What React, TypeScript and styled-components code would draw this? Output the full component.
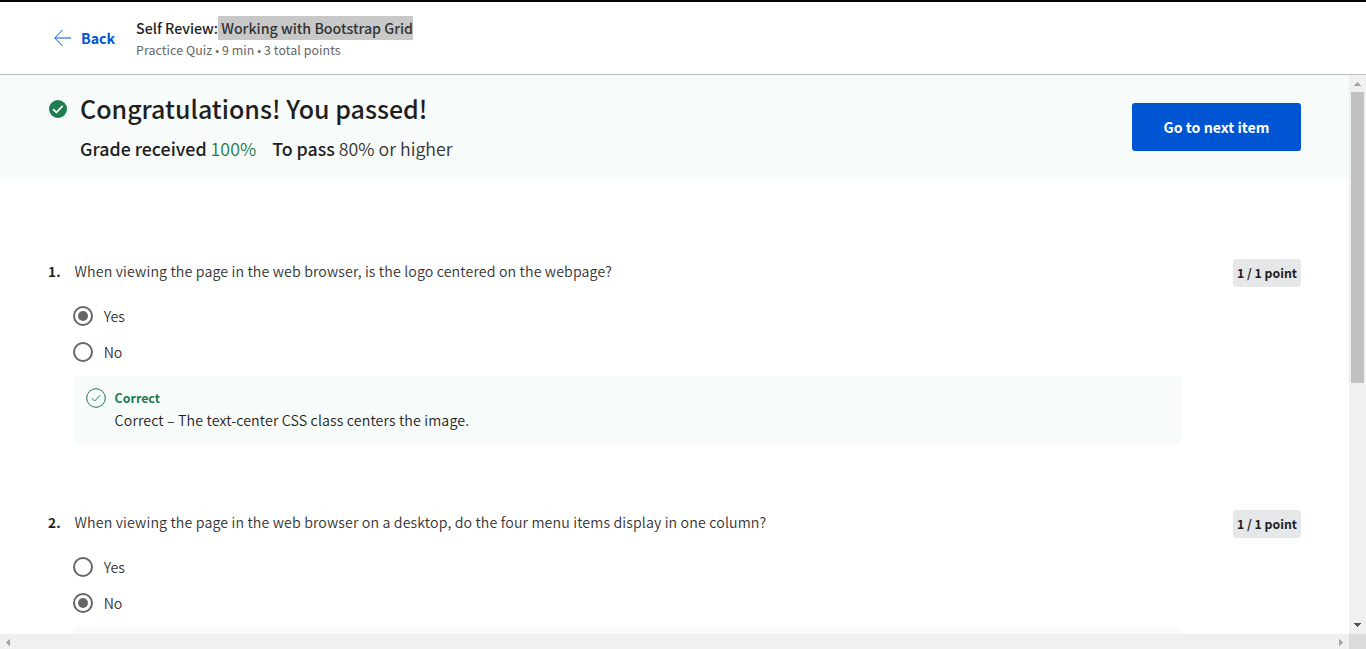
import React from "react";
import styled, { createGlobalStyle } from "styled-components";

const GlobalStyle = createGlobalStyle`
  *, *::before, *::after { box-sizing: border-box; }
  html, body { margin: 0; padding: 0; overflow: hidden; background: #fff; }
  body {
    font-family: "Noto Sans CJK SC", "Open Sans", sans-serif;
    color: #1f1f1f;
  }
  button { font-family: inherit; }
`;

const Page = styled.div`
  width: 1366px;
  height: 649px;
  display: flex;
  flex-direction: column;
  overflow: hidden;
`;

const Header = styled.header`
  height: 75px;
  flex: none;
  display: flex;
  border-top: 2px solid #050505;
  border-bottom: 1px solid #bdbdbd;
  padding-left: 54px;
`;

const BackLink = styled.a`
  display: flex;
  width: 82px;
  height: 24px;
  margin-top: 24px;
  color: #0056d2;
  font-size: 14.2px;
  line-height: 24px;
  font-weight: 700;
  svg { margin: 3px 10px 0 0; flex: none; }
`;

const Titles = styled.div`
  padding-top: 14px;
  white-space: nowrap;
`;

const QuizTitle = styled.div`
  display: flex;
  height: 24px;
  font-size: 14.2px;
  line-height: 24px;
  font-weight: 500;
  white-space: pre;
`;

const Highlight = styled.span`
  background: #c8c8c8;
  color: #333;
`;

const QuizMeta = styled.div`
  height: 20px;
  font-size: 12.4px;
  line-height: 20px;
  letter-spacing: 0.08px;
  color: #666;
`;

const Dot = styled.span`
  font-family: "Liberation Sans", sans-serif;
  font-size: 11px;
`;

const Body = styled.div`
  flex: 1;
  min-height: 0;
  display: flex;
`;

const Content = styled.main`
  flex: 1;
  height: 559px;
  overflow: hidden;
`;

const Banner = styled.section`
  height: 104px;
  background: #f7fbfa;
  display: flex;
  justify-content: space-between;
  padding: 17px 48px 0 49px;
`;

const Result = styled.div`
  display: flex;
  gap: 13px;
  & > svg { margin-top: 8px; flex: none; }
`;

const ResultTitle = styled.h1`
  margin: 0;
  font-size: 25px;
  line-height: 32px;
  font-weight: 500;
  white-space: nowrap;
`;

const GradeRow = styled.div`
  display: flex;
  gap: 16px;
  margin-top: 12px;
  font-size: 17.8px;
  line-height: 24px;
  font-weight: 350;
  color: #333;
  white-space: nowrap;
`;

const Strong = styled.span`
  font-weight: 500;
  color: #1f1f1f;
`;

const Score = styled.span`
  color: #1d7c50;
`;

const NextButton = styled.button`
  width: 169px;
  height: 48px;
  margin-top: 11px;
  padding: 0;
  border: 0;
  border-radius: 3px;
  background: #0056d2;
  color: #fff;
  font-size: 14.2px;
  line-height: 24px;
  font-weight: 700;
`;

const Questions = styled.div`
  padding: 79px 48px 0 48px;
`;

const Question = styled.section`
  display: grid;
  grid-template-columns: 26px 1107px 1fr;
  height: 251px;
`;

const Number = styled.div`
  font-size: 13.6px;
  line-height: 26px;
  font-weight: 700;
  letter-spacing: 0.3px;
`;

const Prompt = styled.div`
  padding-left: 0.6px;
  color: #333;
  font-size: 14.2px;
  line-height: 26px;
  font-weight: 350;
  letter-spacing: 0.135px;
  white-space: nowrap;
`;

const Options = styled.div`
  display: flex;
  flex-direction: column;
  gap: 12px;
  margin: 20px 0 12px -1px;
`;

const Option = styled.label`
  display: flex;
  align-items: center;
  gap: 10.7px;
  height: 24px;
  color: #333;
  font-size: 14.2px;
  line-height: 24px;
  font-weight: 350;
`;

const Radio = styled.span<{ $checked: boolean }>`
  width: 20px;
  height: 20px;
  border: 2px solid #666;
  border-radius: 50%;
  display: grid;
  place-items: center;
  &::after {
    content: "";
    width: 10px;
    height: 10px;
    border-radius: 50%;
    background: ${(p) => (p.$checked ? "#666" : "transparent")};
  }
`;

const Feedback = styled.div`
  height: 68px;
  display: flex;
  gap: 8.6px;
  padding: 12px 12px 0;
  background: #f7fbfa;
`;

const FeedbackTitle = styled.div`
  color: #1d7c50;
  font-size: 12.4px;
  line-height: 20px;
  font-weight: 700;
`;

const FeedbackText = styled.div`
  font-size: 14.2px;
  line-height: 24px;
  white-space: nowrap;
  font-weight: 350;
  letter-spacing: 0.135px;
`;

const Points = styled.div`
  justify-self: end;
  width: 68px;
  height: 28px;
  margin-top: 1px;
  border-radius: 4px;
  background: #e5e7e8;
  font-size: 12.3px;
  line-height: 28px;
  font-weight: 700;
  text-align: center;
  white-space: nowrap;
`;

const VerticalBar = styled.div`
  width: 17px;
  height: 559px;
  background: #f0f0f0;
  display: flex;
  flex-direction: column;
  align-items: center;
`;

const VerticalThumb = styled.div`
  width: 13px;
  height: 291px;
  background: #c1c1c1;
  margin-bottom: auto;
`;

const HorizontalBar = styled.div`
  flex: none;
  height: 15px;
  background: #f0f0f0;
  display: flex;
  justify-content: space-between;
`;

const Corner = styled.div`
  width: 17px;
  height: 15px;
  background: #dcdcdc;
`;

const Track = styled.div`
  flex: 1;
  display: flex;
  justify-content: space-between;
`;

const ArrowLeft = () => (
  <svg width="17" height="18" viewBox="0 0 17 18" fill="none" stroke="#0056d2">
    <path d="M8.5 1L0.8 9l7.7 8" strokeWidth="1" />
    <path d="M1 9h16" strokeWidth="1" />
  </svg>
);

const PassedIcon = () => (
  <svg width="18" height="18" viewBox="0 0 18 18" fill="none">
    <circle cx="9" cy="9" r="9" fill="#1d7c50" />
    <path d="M4 9.2l3.3 3.2 6.4-6.5" stroke="#fff" strokeWidth="1.8" />
  </svg>
);

const CorrectIcon = () => (
  <svg width="20" height="20" viewBox="0 0 20 20" fill="none" stroke="#1d7c50">
    <circle cx="10" cy="10" r="9.3" />
    <path d="M6 10.3l2.7 2.7 5.4-5.8" />
  </svg>
);

const BarArrow = ({ w, h, d, color }: { w: number; h: number; d: string; color: string }) => (
  <svg width={w} height={h} viewBox={`0 0 ${w} ${h}`} fill={color} shapeRendering="crispEdges">
    <path d={d} />
  </svg>
);

type QuestionData = { prompt: string; answer: string; feedback: string };

const questions: QuestionData[] = [
  {
    prompt: "When viewing the page in the web browser, is the logo centered on the webpage?",
    answer: "Yes",
    feedback: "Correct – The text-center CSS class centers the image.",
  },
  {
    prompt: "When viewing the page in the web browser on a desktop, do the four menu items display in one column?",
    answer: "No",
    feedback: "",
  },
];

export default function App() {
  return (
    <Page>
      <GlobalStyle />
      <Header>
        <BackLink><ArrowLeft />Back</BackLink>
        <Titles>
          <QuizTitle>Self Review:<Highlight> Working with Bootstrap Grid</Highlight></QuizTitle>
          <QuizMeta>Practice Quiz <Dot>•</Dot> 9 min <Dot>•</Dot> 3 total points</QuizMeta>
        </Titles>
      </Header>
      <Body>
        <Content>
          <Banner>
            <Result>
              <PassedIcon />
              <div>
                <ResultTitle>Congratulations! You passed!</ResultTitle>
                <GradeRow>
                  <span><Strong>Grade received</Strong> <Score>100%</Score></span>
                  <span><Strong>To pass</Strong> 80% or higher</span>
                </GradeRow>
              </div>
            </Result>
            <NextButton>Go to next item</NextButton>
          </Banner>
          <Questions>
            {questions.map((q, i) => (
              <Question key={i}>
                <Number>{i + 1}.</Number>
                <div>
                  <Prompt>{q.prompt}</Prompt>
                  <Options>
                    {["Yes", "No"].map((o) => (
                      <Option key={o}><Radio $checked={o === q.answer} />{o}</Option>
                    ))}
                  </Options>
                  <Feedback>
                    {q.feedback && (
                      <>
                        <CorrectIcon />
                        <div>
                          <FeedbackTitle>Correct</FeedbackTitle>
                          <FeedbackText>{q.feedback}</FeedbackText>
                        </div>
                      </>
                    )}
                  </Feedback>
                </div>
                <Points>1 / 1 point</Points>
              </Question>
            ))}
          </Questions>
        </Content>
        <VerticalBar>
          <BarArrow w={17} h={17} d="M5 11h7v-1h-1v-1h-1v-1h-1v-1h-1v1h-1v1h-1v1h-1z" color="#a3a3a3" />
          <VerticalThumb />
          <BarArrow w={17} h={17} d="M5 6h7v1h-1v1h-1v1h-1v1h-1v-1h-1v-1h-1v-1h-1z" color="#505050" />
        </VerticalBar>
      </Body>
      <HorizontalBar>
        <Track>
          <BarArrow w={15} h={15} d="M10 5v7h-1v-1h-1v-1h-1v-1h-1v-1h1v-1h1v-1h1v-1z" color="#a3a3a3" />
          <BarArrow w={15} h={15} d="M5 5v7h1v-1h1v-1h1v-1h1v-1h-1v-1h-1v-1h-1v-1z" color="#a3a3a3" />
        </Track>
        <Corner />
      </HorizontalBar>
    </Page>
  );
}
